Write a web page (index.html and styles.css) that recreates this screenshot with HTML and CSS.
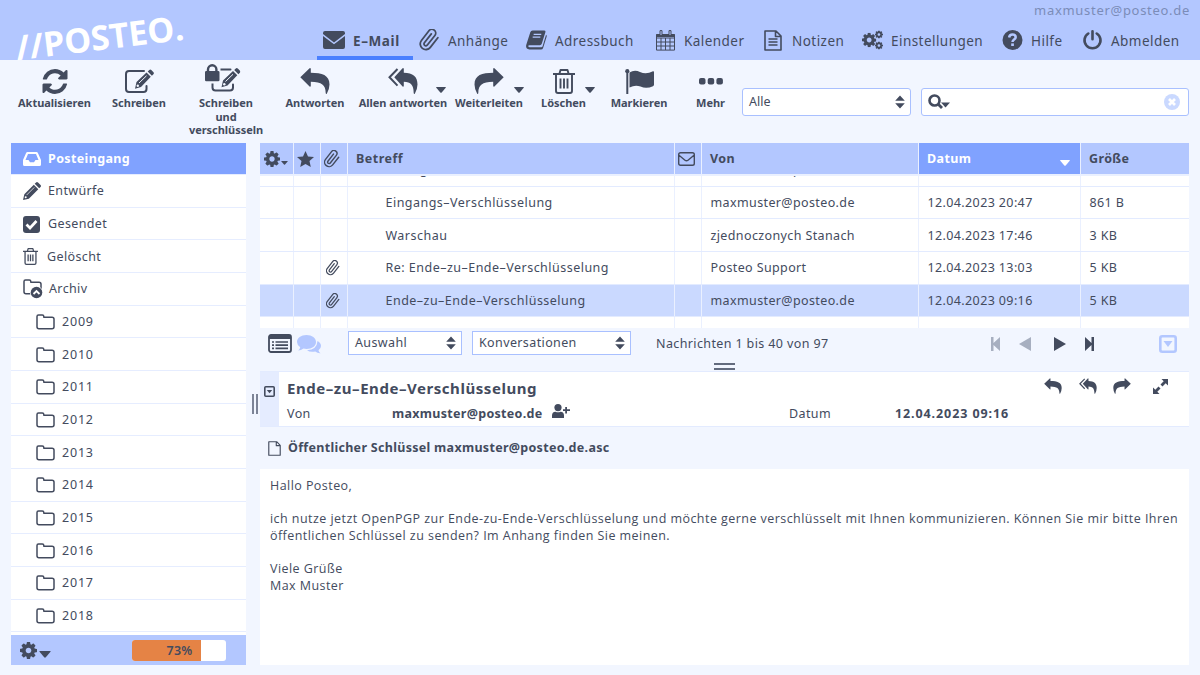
FILE: index.html
```html
<!DOCTYPE html>
<html lang="de">
<head>
<meta charset="utf-8">
<title>Posteo – E-Mail</title>
<link rel="stylesheet" href="styles.css">
</head>
<body>
<svg class="defs" width="0" height="0">
<symbol id="gear" viewBox="0 128 1536 1536"><path d="M1024 896q0-106-75-181t-181-75-181 75-75 181 75 181 181 75 181-75 75-181zm512-109v222q0 12-8 23t-20 13l-185 28q-19 54-39 91 35 50 107 138 10 12 10 25t-9 23q-27 37-99 108t-94 71q-12 0-26-9l-138-108q-44 23-91 38-16 136-29 186-7 28-36 28h-222q-14 0-24.500-8.500t-11.500-21.500l-28-184q-49-16-90-37l-141 107q-10 9-25 9-14 0-25-11-126-114-165-168-7-10-7-23 0-12 8-23 15-21 51-66.500t54-70.500q-27-50-41-99l-183-27q-13-2-21-12.500t-8-23.500v-222q0-12 8-23t19-13l186-28q14-46 39-92-40-57-107-138-10-12-10-24 0-10 9-23 26-36 98.500-107.500t94.500-71.500q13 0 26 10l138 107q44-23 91-38 16-136 29-186 7-28 36-28h222q14 0 24.500 8.500t11.500 21.500l28 184q49 16 90 37l142-107q9-9 24-9 13 0 25 10 129 119 165 170 7 8 7 22 0 12-8 23-15 21-51 66.500t-54 70.500q26 50 41 98l183 28q13 2 21 12.500t8 23.500z"/></symbol>
<symbol id="clip" viewBox="0 0 20 22"><path transform="rotate(-7 10 11) translate(-1.6 -.6) scale(.94)" fill="none" stroke="currentColor" stroke-width="1.9" stroke-linecap="round" stroke-linejoin="round" d="M21.44 11.05l-9.19 9.19a6 6 0 0 1-8.49-8.49l9.19-9.19a4 4 0 0 1 5.66 5.66l-9.2 9.19a2 2 0 0 1-2.83-2.83l8.49-8.48"/></symbol>
<symbol id="reply" viewBox="0 0 30 26"><path d="M.3 9.3 9.6.3Q10.6-.3 10.8 1V4.800C22 5 29.500 7 29.500 16.500q0 4.500-2.700 9.300-1 .4-1.100-.9C25.500 17 22 14 10.800 13.800v4q-.2 1.300-1.200.7z"/></symbol>
<symbol id="replyall" viewBox="0 0 30 26"><path d="M6.300 9.300 14.600.3q1-.6 1.200.7v3.800C25 5 29.500 8.500 29.500 16.500q0 4.500-2.700 9.300-1 .4-1.100-.9C25.500 17 23 14 15.800 13.800v4q-.2 1.300-1.200.7z"/><path d="M9.500 1 1.500 9.300l8 8.300" fill="none" stroke="currentColor" stroke-width="2"/></symbol>
<symbol id="trash" viewBox="0 0 22 25"><path fill="none" stroke="currentColor" stroke-width="1.900" stroke-linejoin="round" d="M0 5h22M3 5v17q0 2 2 2h12q2 0 2-2V5M6.500 4.500 7.500 1h7l1 3.500M7.500 9.500v10M11 9.500v10M14.500 9.500v10"/></symbol>
<symbol id="pencil" viewBox="0 0 20 20"><path d="M0 20 1.500 13.500 12 3l5 5L6.500 18.500zM13 2l1.500-1.500q1-1 2.200 0L19.500 3.300q1 1.200 0 2.200L18 7z"/><path d="m4 14.500 8.500-8.500" stroke="#fff" stroke-width=".8"/><circle cx="3" cy="17" r="1.100" fill="#fff"/></symbol>
<symbol id="write" viewBox="0 0 30 25"><path fill="none" stroke="currentColor" stroke-width="2" stroke-linecap="round" d="M20 2H5Q2 2 2 5v15q0 3 3 3h14.500q3 0 3-3v-3"/><path d="m11 19.800 1.500-6.800L22.500 3.500l4.300 4.300L17 18zM23.700 2.400l1.600-1.500q1-.8 2 .1l2.200 2.200q.8 1-.1 2L27.900 6.700z"/><path d="m15 14 7.500-7.200" stroke="#f2f6ff" stroke-width="1"/><circle cx="13.800" cy="16.800" r="1.200" fill="#f2f6ff"/></symbol>
<symbol id="down" viewBox="0 0 10 6"><path d="M.6 0h8.800q.8 0 .3.700L5.700 5.400q-.7.800-1.400 0L.3.700Q-.2 0 .6 0z"/></symbol>
<symbol id="updown" viewBox="0 0 10 14"><path d="M5 .5 9.800 5.800H.2zM5 13.500.2 8.200h9.600z"/></symbol>
<symbol id="folder" viewBox="0 0 19 16"><path fill="none" stroke="currentColor" stroke-width="1.500" stroke-linejoin="round" d="M1 12.800V2.500Q1 1 2.500 1h3.800q1.500 0 1.500 1.500v.7h8.200q2 0 2 2v7.600q0 2-2 2H3q-2 0-2-2z"/></symbol>
<symbol id="page" viewBox="0 0 18 21"><path fill="none" stroke="currentColor" stroke-width="1.600" stroke-linejoin="round" d="M1 1h11l5 5v14H1zM11.500 1v5.500H17"/></symbol>
</svg>
<header class="top">
  <div class="logo">//POSTEO.</div>
  <div class="user">maxmuster@posteo.de</div>
  <nav class="nav">
    <a class="active"><svg width="22" height="18" viewBox="0 0 22 18"><path d="M2 0h18q2 0 2 2v1L11 11.500 0 3V2Q0 0 2 0zM0 5l11 8.300L22 5v11q0 2-2 2H2q-2 0-2-2z"/></svg><span>E–Mail</span></a>
    <a><svg width="20" height="22"><use href="#clip"/></svg><span>Anhänge</span></a>
    <a><svg width="22" height="20" viewBox="0 0 22 20"><path d="M7 0h12q1.800 0 1.300 2l-3.800 12q-.5 1.500-2 1.500H3.500q-1.500 0-1 1.300.3.700 1.500.7h12q1 0 1.400-1L21 4.500q1 .5.600 2L18 18q-.6 2-2.300 2H3.500Q-.8 19.500.3 15L4.500 2Q5 0 7 0z"/><path d="M8 4h8M7 7h8" stroke="#b3c7ff" stroke-width="1.300"/></svg><span>Adressbuch</span></a>
    <a><svg width="20" height="21" viewBox="0 0 20 21"><path fill="none" stroke="currentColor" d="M1 4.500h18v15.600H1zM1 8h18M1 12h18M1 16h18M5.500 8v12M10 8v12M14.500 8v12"/><path d="M1 4h18v3H1z"/><path fill="#b3c7ff" stroke="currentColor" d="M4.500.6h2v5h-2zM13.500.6h2v5h-2z"/></svg><span>Kalender</span></a>
    <a><svg class="note" width="18" height="21"><use href="#page"/><path d="M4.500 9h9M4.500 12h9M4.500 15h9" stroke="currentColor" stroke-width="1.400"/></svg><span>Notizen</span></a>
    <a><svg width="22" height="20" viewBox="0 0 22 20"><use href="#gear" x="0" y="2.500" width="15" height="15"/><use href="#gear" x="13.500" y="0" width="8.500" height="8.500"/><use href="#gear" x="13.500" y="11.500" width="8.500" height="8.500"/></svg><span>Einstellungen</span></a>
    <a><svg width="20" height="20" viewBox="0 0 20 20"><circle cx="10" cy="10" r="10"/><path d="M6.600 7.500Q7 4.600 10 4.600t3.200 2.600C13.200 9.500 10 9.600 10 12" fill="none" stroke="#b3c7ff" stroke-width="2.500"/><path d="M8.700 13.400h2.700V16H8.700z" fill="#b3c7ff"/></svg><span>Hilfe</span></a>
    <a><svg width="19" height="20" viewBox="0 0 19 20"><path d="M9.500 1.300v8M5.300 3.500a8 8 0 1 0 8.400 0" fill="none" stroke="currentColor" stroke-width="2.600" stroke-linecap="round"/></svg><span>Abmelden</span></a>
  </nav>
</header>
<div class="tools">
  <div class="actions">
    <a><i><svg width="26" height="25" viewBox="0 128 1536 1536"><path d="M1511 1056q0 5-1 7-64 268-268 434.500t-478 166.500q-146 0-282.500-55t-243.500-157l-129 129q-19 19-45 19t-45-19-19-45v-448q0-26 19-45t45-19h448q26 0 45 19t19 45-19 45l-137 137q71 66 161 102t187 36q134 0 250-65t186-179q11-17 53-117 8-23 30-23h192q13 0 22.500 9.500t9.500 22.500zm25-800v448q0 26-19 45t-45 19h-448q-26 0-45-19t-19-45 19-45l138-138q-148-137-349-137-134 0-250 65t-186 179q-11 17-53 117-8 23-30 23h-199q-13 0-22.500-9.500t-9.500-22.500v-7q65-268 270-434.500t480-166.500q146 0 284 55.500t245 156.500l130-129q19-19 45-19t45 19 19 45z"/></svg></i>Aktualisieren</a>
    <a><i><svg width="30" height="25"><use href="#write"/></svg></i>Schreiben</a>
    <a><i><svg class="lock" width="36" height="29" viewBox="0 0 36 29"><use href="#write" x="5.500" y="3.500" width="30" height="25"/><path d="M0 3h15.500v16.500H0z" fill="#f2f6ff"/><path d="M1.300 7h11.900q1.300 0 1.300 1.300v7.600q0 1.300-1.300 1.300H1.300Q0 17.200 0 15.900V8.300Q0 7 1.300 7z"/><path d="M3 8V5.500a4.200 4.200 0 0 1 8.400 0V8" fill="none" stroke="currentColor" stroke-width="2.400"/></svg></i>Schreiben<br>und<br>verschlüsseln</a>
    <a><i><svg width="30" height="26"><use href="#reply"/></svg></i>Antworten</a>
    <a><i><svg width="30" height="26"><use href="#replyall"/></svg><svg class="more" width="10" height="6"><use href="#down"/></svg></i>Allen antworten</a>
    <a><i><svg class="flip" width="30" height="26"><use href="#reply"/></svg><svg class="more" width="10" height="6"><use href="#down"/></svg></i>Weiterleiten</a>
    <a><i><svg width="22" height="25"><use href="#trash"/></svg><svg class="more" width="10" height="6"><use href="#down"/></svg></i>Löschen</a>
    <a><i><svg width="29" height="25" viewBox="0 0 29 25"><path d="M1.300 3h2v22h-2zM4.500 3.500q5-3 10.500-.5 6 3 13-.7 1-.4 1 1v12.500q0 1-1 1.400-6.500 3-12.500.4-5-2.200-11 .8z"/><circle cx="2.300" cy="2.200" r="2.100"/></svg></i>Markieren</a>
    <a><i><svg class="dots" width="24" height="7" viewBox="0 0 24 7"><rect width="6.500" height="6.500" rx="2"/><rect x="8.700" width="6.500" height="6.500" rx="2"/><rect x="17.400" width="6.500" height="6.500" rx="2"/></svg></i>Mehr</a>
  </div>
  <div class="select filter"><span>Alle</span><svg width="10" height="14"><use href="#updown"/></svg></div>
  <div class="search"><svg width="22" height="16" viewBox="0 0 22 16"><circle cx="6.500" cy="6.500" r="5" fill="none" stroke="currentColor" stroke-width="2.600"/><path d="m10 10 4 4" stroke="currentColor" stroke-width="2.800"/><path d="M13 8.500h9l-4.500 5z"/></svg><svg class="clear" width="16" height="16" viewBox="0 0 16 16"><circle cx="8" cy="8" r="8"/><path d="m5 5 6 6m0-6-6 6" stroke="#fff" stroke-width="2.700"/></svg></div>
</div>
<main class="main">
  <aside class="side">
    <div class="folders">
      <div class="f sel"><svg width="18" height="14" viewBox="0 0 18 14"><path fill-rule="evenodd" d="M4.500 0h9q1 0 1.400 1L18 8v4.500q0 1.500-1.500 1.500h-15Q0 14 0 12.500V8l3.100-7Q3.500 0 4.500 0zM5 2 2.500 8h3L7 10.200h4L12.500 8h3L13 2z"/></svg><span>Posteingang</span></div>
      <div class="f"><svg width="18" height="18"><use href="#pencil"/></svg><span>Entwürfe</span></div>
      <div class="f"><svg class="chk" width="17" height="17" viewBox="0 0 17 17"><rect width="17" height="17" rx="3"/><path d="m3.500 8.500 3.500 3.500 6.500-7" fill="none" stroke="#fff" stroke-width="2.700"/></svg><span>Gesendet</span></div>
      <div class="f"><svg class="bin" width="15" height="17"><use href="#trash"/></svg><span>Gelöscht</span></div>
      <div class="f arch"><svg width="20" height="20" viewBox="0 0 20 20"><use href="#folder" width="19" height="16"/><circle cx="13.500" cy="13.500" r="6.500" fill="#fff"/><circle cx="13.500" cy="13.500" r="5.800"/><path d="m10.500 15 3-3 3 3" fill="none" stroke="#fff" stroke-width="1.800"/></svg><span>Archiv</span></div>
      <div class="f sub"><svg width="19" height="16"><use href="#folder"/></svg><span>2009</span></div>
      <div class="f sub"><svg width="19" height="16"><use href="#folder"/></svg><span>2010</span></div>
      <div class="f sub"><svg width="19" height="16"><use href="#folder"/></svg><span>2011</span></div>
      <div class="f sub"><svg width="19" height="16"><use href="#folder"/></svg><span>2012</span></div>
      <div class="f sub"><svg width="19" height="16"><use href="#folder"/></svg><span>2013</span></div>
      <div class="f sub"><svg width="19" height="16"><use href="#folder"/></svg><span>2014</span></div>
      <div class="f sub"><svg width="19" height="16"><use href="#folder"/></svg><span>2015</span></div>
      <div class="f sub"><svg width="19" height="16"><use href="#folder"/></svg><span>2016</span></div>
      <div class="f sub"><svg width="19" height="16"><use href="#folder"/></svg><span>2017</span></div>
      <div class="f sub"><svg width="19" height="16"><use href="#folder"/></svg><span>2018</span></div>
    </div>
    <div class="sidefoot"><svg width="17" height="17"><use href="#gear"/></svg><svg class="caret" width="12" height="7"><use href="#down"/></svg><div class="quota"><div class="used" style="width:73%">73%</div></div></div>
  </aside>
  <div class="vsplit"><i></i></div>
  <section class="content">
    <div class="row head">
      <div><svg width="16" height="16"><use href="#gear"/></svg><svg class="headcaret" width="7" height="4"><use href="#down"/></svg></div>
      <div><svg width="17" height="16" viewBox="0 0 17 16"><path d="m8.500 0 2.500 5.400 6 .7-4.500 4 1.300 5.900-5.300-3-5.300 3 1.300-5.900L0 6.100l6-.7z"/></svg></div>
      <div><svg width="16" height="18"><use href="#clip"/></svg></div>
      <div>Betreff</div>
      <div><svg width="17" height="14" viewBox="0 0 17 14"><path fill="none" stroke="currentColor" stroke-width="1.400" d="M2.500.7h12q1.800 0 1.800 1.800v9q0 1.800-1.800 1.800h-12Q.7 13.300.7 11.500v-9Q.7.700 2.500.7zM.7 3l6.300 5.200q1.500 1.200 3 0L16.300 3"/></svg></div>
      <div>Von</div>
      <div class="sorted">Datum<svg width="10" height="6"><use href="#down"/></svg></div>
      <div>Größe</div>
    </div>
    <div class="rows">
      <div class="row"><div></div><div></div><div></div><div>Anfrage</div><div></div><div>maxmuster@posteo.de</div><div></div><div></div></div>
      <div class="row"><div></div><div></div><div></div><div>Eingangs–Verschlüsselung</div><div></div><div>maxmuster@posteo.de</div><div>12.04.2023 20:47</div><div>861 B</div></div>
      <div class="row"><div></div><div></div><div></div><div>Warschau</div><div></div><div>zjednoczonych Stanach</div><div>12.04.2023 17:46</div><div>3 KB</div></div>
      <div class="row"><div></div><div></div><div><svg width="14" height="16"><use href="#clip"/></svg></div><div>Re: Ende–zu–Ende–Verschlüsselung</div><div></div><div>Posteo Support</div><div>12.04.2023 13:03</div><div>5 KB</div></div>
      <div class="row chosen"><div></div><div></div><div><svg width="14" height="16"><use href="#clip"/></svg></div><div>Ende–zu–Ende–Verschlüsselung</div><div></div><div>maxmuster@posteo.de</div><div>12.04.2023 09:16</div><div>5 KB</div></div>
      <div class="row"><div></div><div></div><div></div><div></div><div></div><div></div><div></div><div></div></div>
    </div>
    <div class="listfoot">
      <svg width="24" height="19" viewBox="0 0 24 19"><rect x="1" y="1" width="22" height="17" rx="2" fill="none" stroke="currentColor" stroke-width="1.800"/><path d="M1 1h22v4H1z"/><path d="M4 8h2m1.500 0H20M4 11.200h2m1.500 0H20M4 14.400h2m1.500 0H20" stroke="currentColor" stroke-width="1.700"/></svg>
      <svg class="chat" width="24" height="19" viewBox="0 0 24 19"><path d="M9.500 0C15 0 19 3 19 7s-4 7-9.500 7q-1.500 0-3-.4Q4 15.500 1.200 15.500q1.800-1.300 2-3.300Q0 10 0 7c0-4 4-7 9.500-7z"/><path d="M20.500 6q3.500 2 3.500 5 0 2.500-2.500 4.200.3 2 2 3.100-3 .2-5.200-1.800Q13 17.500 10 15.300q10-.6 10.500-9.300z"/></svg>
      <div class="select s1"><span>Auswahl</span><svg width="10" height="14"><use href="#updown"/></svg></div>
      <div class="select s2"><span>Konversationen</span><svg width="10" height="14"><use href="#updown"/></svg></div>
      <span class="count">Nachrichten 1 bis 40 von 97</span>
      <div class="pager"><svg width="10" height="14" viewBox="0 0 10 14"><path d="M0 0h2.500v6L9 0v14L2.500 8v6H0z"/></svg><svg width="12" height="14" viewBox="0 0 12 14"><path d="M12 0v14L0 7z"/></svg><svg class="on" width="12" height="14" viewBox="0 0 12 14"><path d="M0 0v14l12-7z"/></svg><svg class="on" width="10" height="14" viewBox="0 0 10 14"><path d="M10 0H7.500v6L1 0v14l6.500-6v6H10z"/></svg></div>
      <svg class="box" width="18" height="18" viewBox="0 0 18 18"><rect x="1.300" y="1.300" width="15.400" height="15.400" rx="2" fill="none" stroke="currentColor" stroke-width="2.600"/><path d="M4.500 6h9L9 12z"/></svg>
      <i class="hgrip"></i>
    </div>
    <div class="msghead">
      <div class="fold"><svg width="11" height="11" viewBox="0 0 11 11"><rect x=".8" y=".8" width="9.400" height="9.400" rx="1" fill="none" stroke="currentColor" stroke-width="1.600"/><path d="M2.800 4h5.400L5.500 7.300z"/></svg></div>
      <div class="meta">
        <div class="line1"><h1>Ende–zu–Ende–Verschlüsselung</h1><div class="quick"><svg width="18" height="16"><use href="#reply"/></svg><svg width="18" height="16"><use href="#replyall"/></svg><svg class="flip" width="18" height="16"><use href="#reply"/></svg><svg class="expand" width="15" height="15" viewBox="0 0 15 15"><path d="M8.500 0H15v6.500l-2.300-2.200L9.500 7.500l-2-2 3.200-3.200zM0 8.500l2.300 2.200 3.200-3.200 2 2-3.200 3.200L6.500 15H0z"/><path d="m5 5 5 5" stroke="#fff" stroke-width="1.200"/></svg></div></div>
        <div class="line2"><span>Von</span><b class="from">maxmuster@posteo.de</b><svg width="18" height="14" viewBox="0 0 18 14"><circle cx="6" cy="3.600" r="3.600"/><path d="M0 14v-2.500Q0 8 3.500 7.700 6 9 8.500 7.700 12 8 12 11.500V14zM11 5.200h2.200V3h1.800v2.200H18V7h-3v2.400h-1.800V7H11z"/></svg><span class="dl">Datum</span><b class="date">12.04.2023 09:16</b></div>
      </div>
    </div>
    <div class="attach"><svg width="13" height="15"><use href="#page"/></svg><b>Öffentlicher Schlüssel maxmuster@posteo.de.asc</b></div>
    <div class="message"><p>Hallo Posteo,</p><p>ich nutze jetzt OpenPGP zur Ende-zu-Ende-Verschlüsselung und möchte gerne verschlüsselt mit Ihnen kommunizieren. Können Sie mir bitte Ihren<br>öffentlichen Schlüssel zu senden? Im Anhang finden Sie meinen.</p><p>Viele Grüße<br>Max Muster</p></div>
  </section>
</main>
</body>
</html>
```
FILE: styles.css
```css
* { box-sizing: border-box; }
body { margin: 0; width: 1200px; height: 675px; overflow: hidden; background: #f2f6ff; color: #434b5e; font: 12.5px/16px "Noto Sans", sans-serif; white-space: nowrap; }
svg { display: block; flex: none; fill: currentColor; }
.defs { position: absolute; }
i { font-style: normal; }

.top { position: relative; height: 60px; background: #b3c7ff; }
.logo { position: absolute; left: 15px; top: 15px; color: #fff; font: bold 34px/44px "Open Sans", sans-serif; letter-spacing: -.2px; transform: rotate(-7deg); }
.user { position: absolute; right: 10px; top: 2px; color: #7b8cb8; font-size: 13px; letter-spacing: .7px; }
.nav { display: grid; grid-template-columns: 97px 107px 129px 108px 99px 140px 80px 117px; padding: 20px 0 0 323px; }
.nav a { position: relative; display: flex; align-items: center; height: 40px; font-size: 13.5px; letter-spacing: .45px; }
.nav svg { width: 21px; margin-left: -1px; }
.nav span { margin-left: 8px; padding-top: 2px; }
.nav .note { width: 18px; margin: 0 2px 0 0; }
.nav .active { font-weight: bold; letter-spacing: .6px; }
.nav .active svg { width: 22px; margin-left: 0; }
.nav .active::after { content: ""; position: absolute; left: -6px; bottom: 0; width: 96px; height: 4px; background: #4a80ff; }

.tools { display: flex; height: 83px; }
.actions { display: grid; grid-template-columns: 91px 78px 96px 82px 94px 78px 71px 80px 63px; padding-left: 9px; width: 742px; }
.actions a { text-align: center; font-weight: bold; font-size: 11px; line-height: 13.500px; letter-spacing: -.03px; }
.actions i { position: relative; display: flex; align-items: center; justify-content: center; height: 36px; padding-top: 6px; }
.more { position: absolute; right: 4px; bottom: 3px; }
.lock { margin: -5px 6px 0 0; }
.flip { transform: scaleX(-1); }
.select { display: flex; align-items: center; justify-content: space-between; height: 24px; padding: 0 5px 0 6px; background: #fff; border: 1px solid #a9c0ff; }
.filter { width: 169px; height: 28px; margin-top: 28px; border-radius: 3px; }
.search { display: flex; align-items: center; justify-content: space-between; width: 268px; height: 28px; margin: 28px 0 0 10px; padding: 0 8px 0 6px; background: #fff; border: 1px solid #a9c0ff; border-radius: 3px; }
.clear { color: #cad9ff; }

.main { display: flex; height: 522px; padding-left: 11px; }
.side { width: 235px; background: #fff; }
.folders { height: 492px; overflow: hidden; }
.f { display: flex; align-items: center; height: 32.68px; padding: 1px 0 0 12px; border-bottom: 1px solid #e6edff; letter-spacing: .37px; }
.f svg { margin-right: 7px; }
.f .chk { margin-right: 8px; }
.f .bin { margin-right: 9px; }
.arch svg { margin-right: 6px; }
.f.sel { height: 32px; background: #80a2ff; color: #fff; font-weight: bold; }
.f.sub { padding-left: 25px; letter-spacing: .8px; }
.sidefoot { display: flex; align-items: center; height: 30px; padding-left: 9px; background: #b3c7ff; }
.caret { margin: 8px 0 0 2px; }
.quota { width: 94px; height: 21px; margin-left: 81px; background: #fff; border-radius: 3px; overflow: hidden; }
.used { height: 21px; padding-right: 8px; background: #e58345; text-align: right; line-height: 21px; font-weight: 600; letter-spacing: .3px; }
.vsplit { display: flex; width: 14px; padding: 251px 0 0 6px; }
.vsplit i { width: 6px; height: 20px; border: solid #7d8496; border-width: 0 2px; }
.content { width: 929px; }

.row { display: grid; grid-template-columns: 34px 27px 27px 327px 27px 217px 162px 108px; height: 32.700px; border-bottom: 1px solid #e3ebff; letter-spacing: .38px; }
.row > div { display: flex; align-items: center; padding: 1px 0 0 8.500px; border-right: 1px solid #eaf0ff; }
.row > div:last-child { border-right: 0; }
.row > div:nth-child(3) { padding-left: 5px; }
.row > div:nth-child(4) { padding-left: 37.500px; }
.row > div:nth-child(4) { letter-spacing: .48px; }
.head { height: 33px; background: #b3c7ff; font-weight: bold; border-bottom: 2px solid #eaf0ff; }
.head > div { padding: 0 0 0 8px; }
.head > div:nth-child(-n+3) { padding-left: 3px; }
.head > div:first-child { padding-left: 4px; }
.head > div:nth-child(4) { padding-left: 8px; }
.head > div:nth-child(5) { padding-left: 2.500px; }
.headcaret { margin: 8px 0 0 1px; }
.head .sorted { justify-content: space-between; padding-right: 10px; background: #80a2ff; color: #fff; }
.sorted svg { margin-top: 9px; }
.rows { display: flex; flex-direction: column; height: 152px; overflow: hidden; background: #fff; }
.rows .row { flex: none; }
.rows .row:first-child { margin-top: -22px; }
.chosen { background: #cad9ff; }

.listfoot { position: relative; display: flex; height: 44px; padding: 3px 0 0 8px; border-bottom: 1px solid #e3ebff; letter-spacing: .38px; }
.listfoot > svg { margin-top: 3px; }
.listfoot .chat { margin: 4px 0 0 5px; color: #b3c7ff; }
.s1 { width: 114px; margin-left: 27px; }
.s2 { width: 159px; margin-left: 10px; }
.count { width: 335px; margin: 5px 0 0 25px; }
.pager { display: flex; gap: 20.500px; padding-top: 6px; margin-left: -.5px; color: #a7afc0; }
.pager svg:nth-child(2) { margin-left: -2px; }
.pager svg:nth-child(3) { margin-left: 2px; }
.pager svg:nth-child(4) { margin-left: -2px; }
.on { color: #434b5e; }
.listfoot .box { position: absolute; left: 899px; top: 4px; color: #b3c7ff; }
.hgrip { position: absolute; left: 454px; top: 35px; width: 21px; height: 7px; border: solid #636b7e; border-width: 2px 0; }

.msghead { display: flex; height: 55px; background: #fff; border-bottom: 1px solid #e3ebff; }
.fold { width: 19px; padding: 14px 0 0 4px; background: #e5ecff; }
.meta { flex: 1; padding: 6px 0 0 8px; }
.line1 { display: flex; justify-content: space-between; height: 28px; }
h1 { margin: -1px 0 0; font-size: 15px; line-height: 22px; letter-spacing: .55px; }
.quick { display: flex; gap: 16.500px; width: 145px; }
.quick .expand { margin-left: 5px; margin-top: 1px; }
.line2 { display: flex; letter-spacing: .3px; }
.line2 > span { width: 105px; letter-spacing: .4px; }
.line2 .from { width: 160px; }
.line2 > svg { margin-top: -2px; }
.line2 .dl { margin-left: 219px; width: 106px; }
.date { letter-spacing: .9px; }
.attach { display: flex; align-items: center; gap: 7px; height: 42px; padding-left: 8px; letter-spacing: .3px; }
.message { height: 196px; padding: 9px 10px; background: #fff; font: 12.5px/16.600px "Open Sans", sans-serif; letter-spacing: .445px; }
.message p { margin: 0 0 16.600px; }
```
